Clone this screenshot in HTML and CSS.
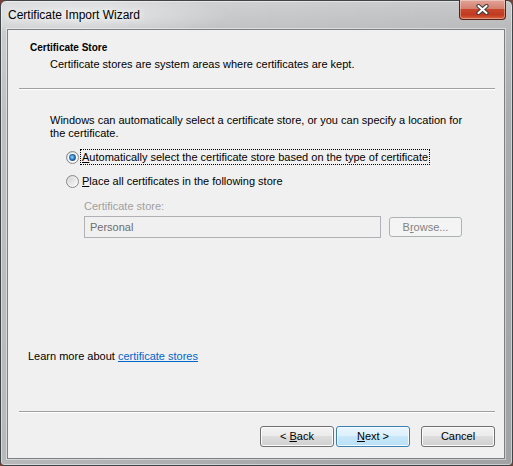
FILE: index.html
```html
<!DOCTYPE html>
<html lang="en">
<head>
<meta charset="utf-8">
<title>Certificate Import Wizard</title>
<link rel="stylesheet" href="styles.css">
</head>
<body>
<svg class="defs" width="0" height="0" aria-hidden="true">
  <defs>
    <linearGradient id="radio-well" x1="0" y1="0" x2="1" y2="1">
      <stop offset="0" stop-color="#cbcbcb"/>
      <stop offset="0.55" stop-color="#e9e9e9"/>
      <stop offset="1" stop-color="#fdfdfd"/>
    </linearGradient>
    <radialGradient id="radio-dot" cx="0.45" cy="0.45" r="0.6">
      <stop offset="0" stop-color="#a9defb"/>
      <stop offset="0.35" stop-color="#4d9fe2"/>
      <stop offset="0.75" stop-color="#1b5c9c"/>
      <stop offset="1" stop-color="#0e4479"/>
    </radialGradient>
  </defs>
</svg>
<div class="window">
  <div class="titlebar">
    <span class="title">Certificate Import Wizard</span>
    <button class="close" aria-label="Close">
      <svg width="13" height="11" viewBox="0 0 13 11">
        <path d="M2.5 2 L10.5 9 M10.5 2 L2.5 9" stroke="#3b3b3b" stroke-width="4.2" stroke-linecap="round"/>
        <path d="M2.5 2 L10.5 9 M10.5 2 L2.5 9" stroke="#ffffff" stroke-width="2.2" stroke-linecap="round"/>
      </svg>
    </button>
  </div>
  <div class="client">
    <div class="wiz-header">
      <div class="wiz-title">Certificate Store</div>
      <div class="wiz-desc">Certificate stores are system areas where certificates are kept.</div>
    </div>
    <div class="sep"></div>
    <div class="wiz-body">
      <p class="intro">Windows can automatically select a certificate store, or you can specify a location for the certificate.</p>
      <div class="options">
        <label class="radio">
          <svg class="radio-mark" width="13" height="13" viewBox="0 0 13 13">
            <circle cx="6.5" cy="6.5" r="6" fill="url(#radio-well)" stroke="#8a8a8a"/>
            <circle cx="6.5" cy="6.5" r="4.6" fill="#ffffff"/>
            <circle cx="6.5" cy="6.5" r="3.4" fill="url(#radio-dot)"/>
          </svg>
          <span class="radio-label focus"><u>A</u>utomatically select the certificate store based on the type of certificate</span>
        </label>
        <label class="radio">
          <svg class="radio-mark" width="13" height="13" viewBox="0 0 13 13">
            <circle cx="6.5" cy="6.5" r="6" fill="url(#radio-well)" stroke="#8a8a8a"/>
            <circle cx="6.5" cy="6.5" r="4.5" fill="none" stroke="#f7f7f7" stroke-opacity="0.6"/>
          </svg>
          <span class="radio-label"><u>P</u>lace all certificates in the following store</span>
        </label>
      </div>
      <div class="store">
        <div class="store-label">Certificate store:</div>
        <div class="store-row">
          <div class="textbox">Personal</div>
          <button class="btn browse" disabled>B<u>r</u>owse...</button>
        </div>
      </div>
    </div>
    <div class="learn">Learn more about <a href="#">certificate stores</a></div>
    <div class="sep"></div>
    <div class="actions">
      <button class="btn">&lt; <u>B</u>ack</button>
      <button class="btn default"><u>N</u>ext &gt;</button>
      <button class="btn cancel">Cancel</button>
    </div>
  </div>
</div>
</body>
</html>
```

FILE: styles.css
```css
* { box-sizing: border-box; }

html, body {
  margin: 0;
  height: 100%;
}

body {
  background: #7a4036;
  font: 11px/13px "Liberation Sans", Arial, sans-serif;
  color: #000;
  overflow: hidden;
}

.defs {
  display: block;
  width: 0;
  height: 0;
  overflow: hidden;
}

/* Aero-style window frame */
.window {
  width: 513px;
  height: 466px;
  display: flex;
  flex-direction: column;
  border: 1px solid #3f4447;
  border-radius: 6px 6px 4px 4px;
  padding: 0 7px 6px 6px;
  background:
    radial-gradient(ellipse 150px 22px at 80px 14px, rgba(255,255,255,0.55), rgba(255,255,255,0) 100%),
    linear-gradient(to right, rgba(255,255,255,0.18), rgba(255,255,255,0) 55%, rgba(0,0,0,0.04)),
    linear-gradient(to bottom, #cdcfd1 0, #bfc1c3 28px, #b0b2b4 120px, #a7a9ab 100%);
  box-shadow: inset 0 0 0 1px rgba(255,255,255,0.45);
}

.titlebar {
  flex: none;
  height: 28px;
  display: flex;
  align-items: flex-start;
}

.title {
  padding: 7px 0 0 1px;
  font-size: 12px;
  line-height: 14px;
  color: #000;
  text-shadow: 0 0 6px rgba(255,255,255,0.9), 0 0 12px rgba(255,255,255,0.8);
}

.close {
  margin: -1px -1px 0 auto;
  width: 47px;
  height: 20px;
  padding: 0;
  display: flex;
  align-items: center;
  justify-content: center;
  border: 1px solid #5a2118;
  border-top: none;
  border-radius: 0 0 4px 4px;
  background: linear-gradient(to bottom, #e1a497 0, #d5806f 45%, #c7472c 50%, #c13a20 78%, #d8653f 100%);
  box-shadow: inset 0 0 0 1px rgba(255,255,255,0.35);
}

.close svg { display: block; }

/* Dialog client area */
.client {
  flex: 1;
  display: flex;
  flex-direction: column;
  background: #f0f0f0;
  border: 1px solid #7b8085;
  box-shadow: 0 0 0 1px rgba(255,255,255,0.45);
}

.wiz-header {
  flex: none;
  height: 58px;
  padding: 11px 0 0 22px;
}

.wiz-title {
  font-weight: bold;
  font-size: 10px;
  line-height: 13px;
}

.wiz-desc {
  margin: 4px 0 0 20px;
}

.sep {
  flex: none;
  height: 2px;
  margin: 0 9px 0 11px;
  border-top: 1px solid #a0a0a0;
  border-bottom: 1px solid #ffffff;
}

.wiz-body {
  flex: 1;
  padding: 24px 0 0 42px;
}

.intro {
  margin: 0;
  max-width: 425px;
}

.options {
  margin: 9px 0 0 16px;
  display: flex;
  flex-direction: column;
  gap: 8px;
}

.radio {
  display: flex;
  align-items: center;
}

.radio-mark {
  flex: none;
  display: block;
  margin-right: 1px;
}

.radio-label {
  border: 1px dotted transparent;
  padding: 0 1px;
  line-height: 14px;
}

.radio-label.focus { border-color: #000; }

.store {
  margin: 11px 0 0 34px;
}

.store-label {
  color: #a0a0a0;
}

.store-row {
  margin-top: 3px;
  display: flex;
  align-items: center;
  gap: 8px;
}

.textbox {
  width: 297px;
  height: 22px;
  padding-left: 5px;
  line-height: 20px;
  color: #6d6d6d;
  border: 1px solid #afb1b4;
  background: #f0f0f0;
}

/* Win7 push buttons */
.btn {
  width: 74px;
  height: 21px;
  padding: 0;
  font: 11px/13px "Liberation Sans", Arial, sans-serif;
  color: #000;
  border: 1px solid #707070;
  border-radius: 3px;
  background: linear-gradient(to bottom, #f2f2f2 0, #ebebeb 49%, #dddddd 50%, #cfcfcf 100%);
  box-shadow: inset 0 0 0 1px #fbfbfb;
}

.btn.default {
  border-color: #3c7fb1;
  background: linear-gradient(to bottom, #eaf6fd 0, #dcf0fc 49%, #c9e8fa 50%, #b9dff5 100%);
  box-shadow: inset 0 0 0 1px #f4fbff;
}

.btn.browse {
  width: 73px;
  height: 20px;
  color: #838383;
  border-color: #adb2b5;
  background: #f4f4f4;
  box-shadow: none;
}

.learn {
  flex: none;
  padding-left: 20px;
  margin-bottom: 48px;
}

.learn a {
  color: #0066cc;
  text-decoration: underline;
}

.actions {
  flex: none;
  display: flex;
  justify-content: flex-end;
  gap: 2px;
  margin: 13px 9px 11px 0;
}

.btn.cancel { margin-left: 9px; }
```
